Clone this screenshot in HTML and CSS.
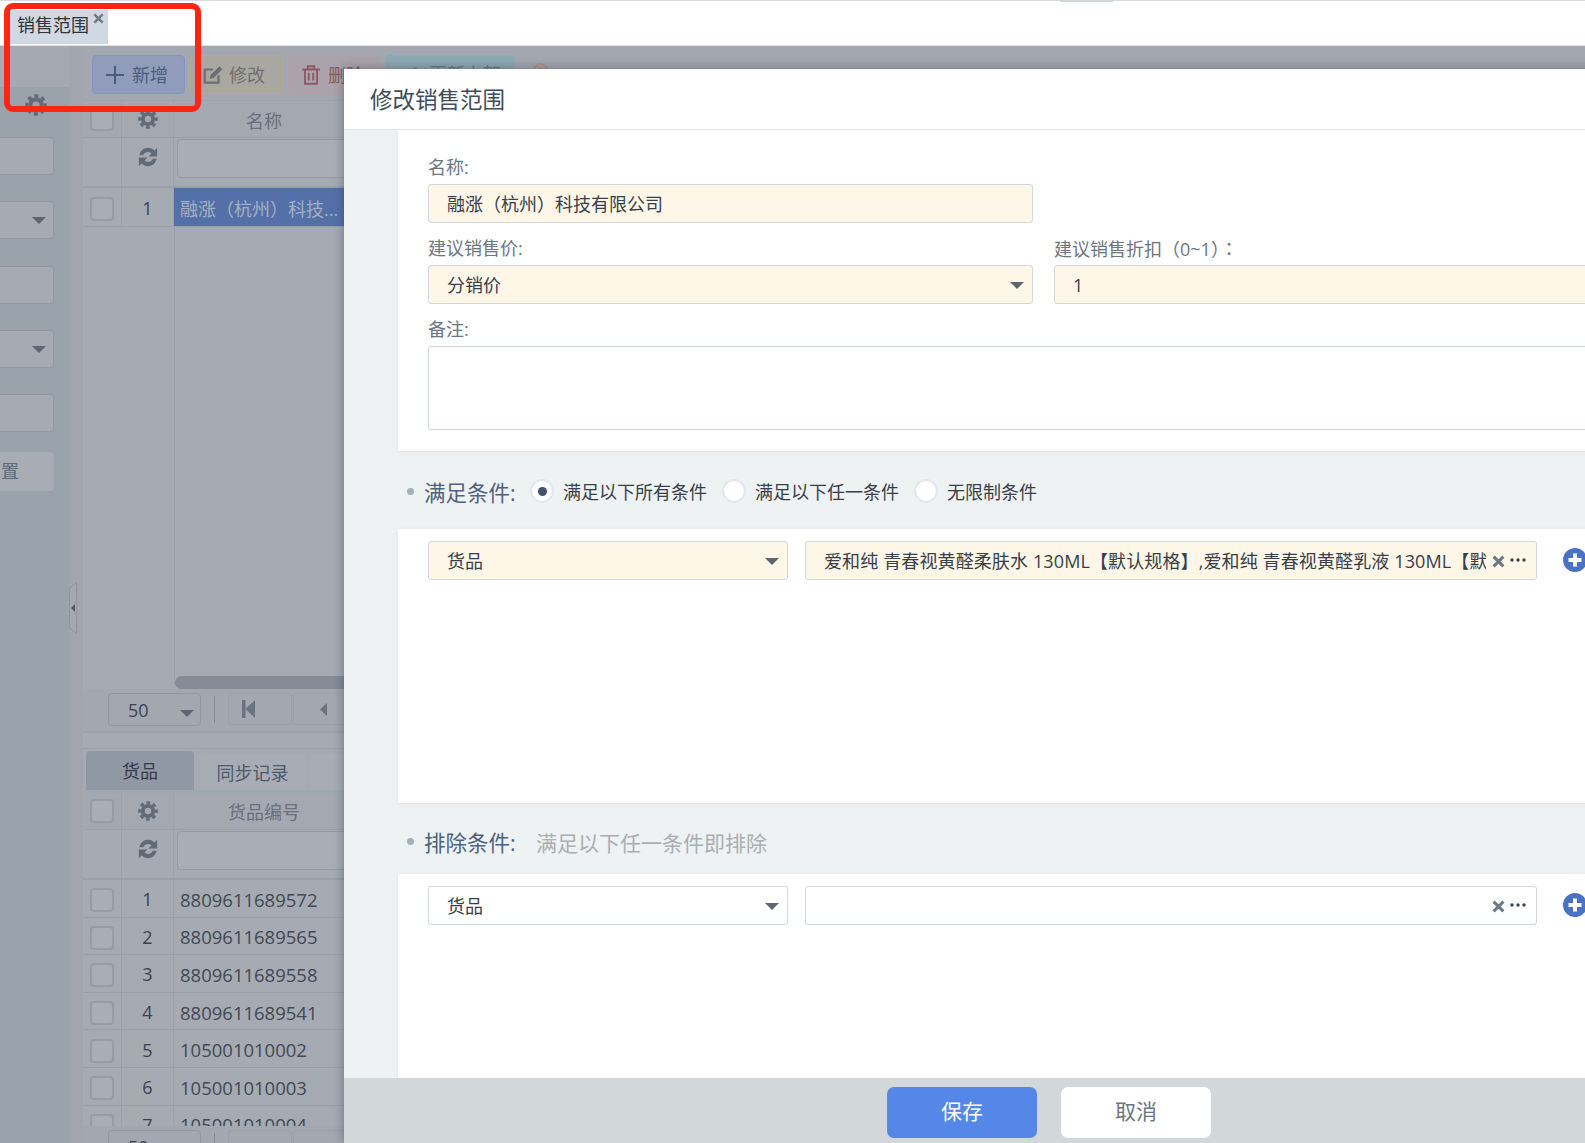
FILE: index.html
```html
<!DOCTYPE html>
<html>
<head>
    <title>销售范围</title>
    <link rel="stylesheet" href="styles.css">
</head>
<body>
    <svg class="defs" width="0" height="0">
        <symbol id="i-cog" viewBox="0 0 24 24">
            <circle cx="12" cy="12" r="6.2" fill="none" stroke="currentColor" stroke-width="4.6"/>
            <circle cx="12" cy="12" r="10" fill="none" stroke="currentColor" stroke-width="3.6" stroke-dasharray="4.4 3.45" stroke-dashoffset="2.2"/>
        </symbol>
        <symbol id="i-refresh" viewBox="0 0 24 24">
            <path d="M2.500 10.200C3.600 5.400 7.400 2 12.200 2c2.600 0 5 1 6.800 2.800L22 2v9.500h-9.500l3.300-3.300c-1-1-2.300-1.600-3.700-1.600-2.500 0-4.600 1.500-5.400 3.600z" fill="currentColor"/>
            <path d="M21.500 13.800C20.400 18.600 16.600 22 11.800 22c-2.600 0-5-1-6.800-2.800L2 22v-9.500h9.500l-3.300 3.300c1 1 2.300 1.600 3.700 1.600 2.500 0 4.600-1.500 5.400-3.600z" fill="currentColor"/>
        </symbol>
        <symbol id="i-plus" viewBox="0 0 24 24">
            <circle cx="12" cy="12" r="12" fill="currentColor"/>
            <path d="M12 5.500v13M5.500 12h13" stroke="#fff" stroke-width="4"/>
        </symbol>
        <symbol id="i-x" viewBox="0 0 12 12">
            <path d="M1.500 1.500l9 9M10.500 1.500l-9 9" stroke="currentColor" stroke-width="2.800" fill="none"/>
        </symbol>
        <symbol id="i-dots" viewBox="0 0 16 4">
            <circle cx="2" cy="2" r="1.700" fill="currentColor"/>
            <circle cx="8" cy="2" r="1.700" fill="currentColor"/>
            <circle cx="14" cy="2" r="1.700" fill="currentColor"/>
        </symbol>
    </svg>

    <div class="topbar">
        <div class="tab-open">
            <span>销售范围</span>
            <svg class="tab-close"><use href="#i-x"/></svg>
        </div>
    </div>
    <div class="top-grip"></div>

    <div class="app">
        <div class="side">
            <div class="side-top"></div>
            <svg class="side-cog"><use href="#i-cog"/></svg>
            <div class="side-field"></div>
            <div class="side-field"><i class="caret"></i></div>
            <div class="side-field"></div>
            <div class="side-field"><i class="caret"></i></div>
            <div class="side-field"></div>
            <div class="side-btn">置</div>
        </div>
        <div class="gutter">
            <svg class="splitter" width="8" height="52" viewBox="0 0 8 52">
                <polygon points="0.500,6 7.500,0.500 7.500,51.500 0.500,46" fill="#a3a8b1" stroke="#8e949e"/>
                <polygon points="2,26 6,22 6,30" fill="#4f5763"/>
            </svg>
        </div>
        <div class="main">
            <div class="toolbar">
                <div class="tool tool-add">
                    <svg width="20" height="20" viewBox="0 0 20 20"><path d="M10 1v18M1 10h18" stroke="currentColor" stroke-width="2" fill="none"/></svg>
                    新增
                </div>
                <div class="tool tool-edit">
                    <svg width="22" height="22" viewBox="0 0 20 20"><path d="M15 10.500V17H2.500V5H10" stroke="currentColor" stroke-width="2" fill="none"/><path d="M7 13.500l.8-3.500 8-8 2.700 2.700-8 8z" fill="currentColor"/></svg>
                    修改
                </div>
                <div class="tool tool-del">
                    <svg width="20" height="22" viewBox="0 0 18 20"><path d="M1 5h16M6 5V2h6v3M3.500 5v13h11V5M7 8v7M11 8v7" stroke="currentColor" stroke-width="1.700" fill="none"/></svg>
                    删除
                </div>
                <div class="tool tool-sync">
                    <svg width="14" height="18" viewBox="0 0 14 18"><path d="M7 2l6 6M7 2L1 8M7 2v14" stroke="currentColor" stroke-width="2" fill="none"/></svg>
                    更新上架
                </div>
                <div class="tool-help">?</div>
            </div>

            <div class="grid-head grid-head-1">
                <div class="cell-check"><i class="check"></i></div>
                <div class="cell-num"><svg class="grid-icon"><use href="#i-cog"/></svg></div>
                <div class="cell-text cell-title">名称</div>
            </div>
            <div class="grid-filter">
                <div class="cell-check"></div>
                <div class="cell-num"><svg class="grid-icon grid-icon-up"><use href="#i-refresh"/></svg></div>
                <div class="cell-text"><div class="filter-input"></div></div>
            </div>
            <div class="grid-row">
                <div class="cell-check"><i class="check"></i></div>
                <div class="cell-num">1</div>
                <div class="cell-text cell-selected">融涨（杭州）科技...</div>
            </div>
            <div class="grid-body">
                <div class="grid-scroll"></div>
            </div>
            <div class="pager">
                <div class="pager-size">50<i class="caret"></i></div>
                <div class="pager-sep"></div>
                <div class="pager-btn">
                    <svg width="13" height="18" viewBox="0 0 13 18"><path d="M0 0h3.500v18H0zM13 0v18L3.500 9z" fill="currentColor"/></svg>
                </div>
                <div class="pager-btn pager-prev">
                    <svg width="7" height="13" viewBox="0 0 7 13"><path d="M7 0v13L0 6.500z" fill="currentColor"/></svg>
                </div>
            </div>

            <div class="tabs">
                <div class="tab tab-on">货品</div>
                <div class="tab">同步记录</div>
                <div class="tab"></div>
            </div>
            <div class="grid-head grid-head-2">
                <div class="cell-check"><i class="check"></i></div>
                <div class="cell-num"><svg class="grid-icon"><use href="#i-cog"/></svg></div>
                <div class="cell-text cell-title">货品编号</div>
            </div>
            <div class="grid-filter">
                <div class="cell-check"></div>
                <div class="cell-num"><svg class="grid-icon grid-icon-up"><use href="#i-refresh"/></svg></div>
                <div class="cell-text"><div class="filter-input"></div></div>
            </div>
            <div class="grid-rows">
                <div class="grid-row"><div class="cell-check"><i class="check"></i></div><div class="cell-num">1</div><div class="cell-text">8809611689572</div></div>
                <div class="grid-row"><div class="cell-check"><i class="check"></i></div><div class="cell-num">2</div><div class="cell-text">8809611689565</div></div>
                <div class="grid-row"><div class="cell-check"><i class="check"></i></div><div class="cell-num">3</div><div class="cell-text">8809611689558</div></div>
                <div class="grid-row"><div class="cell-check"><i class="check"></i></div><div class="cell-num">4</div><div class="cell-text">8809611689541</div></div>
                <div class="grid-row"><div class="cell-check"><i class="check"></i></div><div class="cell-num">5</div><div class="cell-text">105001010002</div></div>
                <div class="grid-row"><div class="cell-check"><i class="check"></i></div><div class="cell-num">6</div><div class="cell-text">105001010003</div></div>
                <div class="grid-row"><div class="cell-check"><i class="check"></i></div><div class="cell-num">7</div><div class="cell-text">105001010004</div></div>
            </div>
            <div class="pager pager-last">
                <div class="pager-size">50<i class="caret"></i></div>
                <div class="pager-sep"></div>
                <div class="pager-btn"></div>
                <div class="pager-btn"></div>
            </div>
        </div>
    </div>

    <div class="dialog">
        <div class="dialog-title">修改销售范围</div>
        <div class="dialog-body">
            <div class="card card-form">
                <div class="form-row">
                    <div class="form-field">
                        <label class="form-label">名称:</label>
                        <div class="input input-req">融涨（杭州）科技有限公司</div>
                    </div>
                </div>
                <div class="form-row">
                    <div class="form-field">
                        <label class="form-label">建议销售价:</label>
                        <div class="input input-req">分销价<i class="caret"></i></div>
                    </div>
                    <div class="form-field">
                        <label class="form-label">建议销售折扣（0~1）<span class="colon-wide">：</span></label>
                        <div class="input input-req">1</div>
                    </div>
                </div>
                <div class="form-note">
                    <label class="form-label">备注:</label>
                    <div class="textarea"></div>
                </div>
            </div>

            <div class="section-head">
                <i class="bullet"></i>
                <span class="section-name">满足条件:</span>
                <span class="radio radio-on"></span><span class="radio-text">满足以下所有条件</span>
                <span class="radio"></span><span class="radio-text">满足以下任一条件</span>
                <span class="radio"></span><span class="radio-text">无限制条件</span>
            </div>
            <div class="card card-cond">
                <div class="cond-row">
                    <div class="input input-req cond-type">货品<i class="caret"></i></div>
                    <div class="input input-req cond-pick">
                        <span class="pick-text">爱和纯 青春视黄醛柔肤水 130ML【默认规格】,爱和纯 青春视黄醛乳液 130ML【默认规格】</span>
                        <svg class="pick-x"><use href="#i-x"/></svg>
                        <svg class="pick-dots"><use href="#i-dots"/></svg>
                    </div>
                    <svg class="cond-add"><use href="#i-plus"/></svg>
                </div>
            </div>

            <div class="section-head section-head-2">
                <i class="bullet"></i>
                <span class="section-name">排除条件:</span>
                <span class="section-hint">满足以下任一条件即排除</span>
            </div>
            <div class="card card-last">
                <div class="cond-row">
                    <div class="input cond-type">货品<i class="caret"></i></div>
                    <div class="input cond-pick">
                        <span class="pick-text"></span>
                        <svg class="pick-x"><use href="#i-x"/></svg>
                        <svg class="pick-dots"><use href="#i-dots"/></svg>
                    </div>
                    <svg class="cond-add"><use href="#i-plus"/></svg>
                </div>
            </div>
        </div>
        <div class="dialog-foot">
            <div class="btn btn-save">保存</div>
            <div class="btn btn-cancel">取消</div>
        </div>
    </div>

    <div class="mark"></div>
</body>
</html>
```

FILE: styles.css
```css
* { box-sizing: border-box; }
html, body { margin: 0; height: 100%; overflow: hidden; }
body { position: relative; width: 1585px; height: 1143px; font-family: "Open Sans", "Noto Sans CJK SC", sans-serif; font-size: 18px; color: #3a4450; background: #a6aab3; }
.defs { position: absolute; }

/* top strip */
.topbar { height: 46px; padding: 10px 0 1px 10px; background: #fff; border-top: 1px solid #d6dcdc; border-bottom: 1px solid #dfe3e6; display: flex; }
.tab-open { width: 98px; height: 34px; margin-top: -1px; padding-left: 7px; background: #d0d8e3; color: #333; position: relative; line-height: 31px; }
.tab-close { position: absolute; left: 83px; top: 3px; width: 11px; height: 11px; color: #6f7a86; }
.top-grip { position: absolute; left: 1060px; top: 0; width: 53px; height: 2px; background: #d0d5d5; }

/* dimmed page behind the dialog */
.app { display: flex; height: 1097px; }
.side { width: 69px; background: #9aa2ac; display: flex; flex-direction: column; align-items: flex-start; }
.side-top { width: 69px; height: 41px; background: #a5a9b2; flex: none; }
.side-cog { width: 22px; height: 22px; margin: 7px 0 0 25px; color: #626c79; flex: none; }
.side-field { width: 54px; height: 38px; margin-top: 26.25px; background: #a6aab3; border: 1px solid #9399a3; border-left: 0; border-radius: 0 4px 4px 0; position: relative; flex: none; }
.side-cog + .side-field { margin-top: 21px; }
.side-field .caret { left: 32px; top: 15px; }
.side-btn { width: 54px; height: 39px; margin-top: 20px; padding-left: 1px; background: #a8acb5; border-radius: 0 4px 4px 0; line-height: 38px; color: #5d6a7c; overflow: hidden; flex: none; }

.gutter { width: 14px; background: #a0a5ae; position: relative; }
.splitter { position: absolute; left: 0; top: 536px; }

.main { flex: 1; min-width: 0; background: #a6aab3; display: flex; flex-direction: column; }
.toolbar { height: 54px; flex: none; padding: 9px 0 0 9px; display: flex; gap: 5px; background: #a3a7b0; }
.tool { height: 39px; width: 93px; padding: 1px 4px 0 0; border: 1px solid; border-radius: 4px; display: flex; align-items: center; justify-content: center; gap: 7px; font-size: 18px; line-height: 37px; }
.tool-add { background: #909cb9; border-color: #8097c4; color: #4c5c7e; }
.tool-edit { background: #a9a8a0; border-color: #b4ab8f; color: #6c6f72; gap: 5px; padding-right: 6px; }
.tool-del { background: #aba3ab; border-color: #b59ea3; color: #8c5a60; }
.tool-sync { width: 129px; padding: 0 0 0 8px; background: #8fa8b2; border-color: #82aeb8; color: #56808f; }
.tool-help { width: 15px; height: 15px; margin: 8px 0 0 13px; border: 2px solid #b48f86; border-radius: 50%; font-size: 11px; line-height: 11px; text-align: center; color: #b48f86; }

.grid-head, .grid-filter, .grid-row { display: flex; flex: none; border-bottom: 1px solid #9aa0aa; background: #a6aab3; }
.grid-head { height: 38px; background: #a4a8b1; border-top: 1px solid #9ea3ad; }
.grid-filter { height: 50px; border-bottom: 2px solid #98a0aa; }
.grid-row { height: 39px; }
.cell-check { width: 39px; flex: none; border-right: 1px solid #9ca1ab; display: flex; align-items: center; padding-left: 7px; }
.cell-num { width: 52px; flex: none; border-right: 1px solid #9ca1ab; display: flex; align-items: center; justify-content: center; color: #3b4250; }
.cell-text { flex: 1; min-width: 0; padding-left: 6px; display: flex; align-items: center; color: #3f4652; white-space: nowrap; overflow: hidden; }
.cell-title { flex: 0 0 180px; padding-left: 0; justify-content: center; color: #69707d; }
.grid-head-1 .cell-title { padding-top: 2px; }
.cell-selected { background: #5470a9; color: #a5afc1; padding-left: 6px; }
.check { display: block; width: 24px; height: 24px; background: #a9adb6; border: 2px solid #969ba5; border-radius: 4px; }
.grid-row .check { margin-top: 4px; }
.grid-row .cell-num, .grid-row .cell-text { padding-top: 2px; }
.grid-icon { width: 20px; height: 20px; color: #616b78; }
.grid-icon-up { width: 22px; height: 22px; margin-top: -10px; }
.filter-input { width: 400px; height: 39px; margin: -7px 0 0 -3px; background: #a9adb6; border: 1px solid #969ba5; border-radius: 4px; flex: none; }
.grid-body { flex: none; height: 462px; margin-left: 91px; border-left: 1px solid #9ca1ab; display: flex; flex-direction: column; justify-content: flex-end; }
.grid-scroll { height: 13px; background: #858b97; border-radius: 7px 0 0 7px; }

.pager { flex: none; height: 44px; padding: 4px 0 0 25px; display: flex; align-items: flex-start; gap: 13px; background: #a3a7b0; border-bottom: 2px solid #9ca2ac; }
.pager-size { width: 93px; height: 33px; padding-left: 19px; border: 1px solid #9097a1; border-radius: 4px; position: relative; line-height: 33px; color: #3d4450; }
.pager-size .caret { left: 71px; top: 16px; }
.pager-sep { width: 1px; height: 27px; margin-top: 3px; background: #868d98; }
.pager-btn { width: 64px; height: 32px; margin-right: -12px; padding-left: 13px; border: 1px solid #9ba0aa; border-radius: 3px; color: #6a7380; display: flex; align-items: center; }
.pager-prev { padding-left: 26px; }
.pager-last { height: 30px; }

.tabs { flex: none; height: 45px; margin-top: 15px; padding: 3px 0 0 3px; display: flex; gap: 6px; align-items: flex-end; border-top: 1px solid #9ca2ac; border-bottom: 3px solid #9ea8b2; }
.tab { width: 105px; height: 36px; background: #a8acb5; border-radius: 4px 4px 0 0; line-height: 38px; text-align: center; color: #4d5a6e; }
.tab:last-child { width: 60px; }
.tab-on { width: 108px; height: 39px; background: #9098a5; color: #333b48; line-height: 41px; }

.grid-head-2 { height: 37px; border-top: 0; }
.grid-rows { flex: none; height: 246px; overflow: hidden; }
.grid-rows .grid-row { height: 37.6px; }
.grid-rows .grid-row .cell-text { color: #424955; font-size: 18.500px; }

.caret { position: absolute; display: block; width: 0; height: 0; border-left: 7px solid transparent; border-right: 7px solid transparent; border-top: 7px solid #5d6672; }

/* dialog */
.dialog { position: absolute; left: 344px; top: 69px; width: 1410px; height: 1074px; background: #eef2f3; box-shadow: 0 0 10px rgba(40, 45, 60, .45); display: flex; flex-direction: column; }
.dialog-title { height: 61px; flex: none; padding-left: 26px; background: #fff; border-bottom: 1px solid #e2e6e8; font-size: 22.5px; line-height: 61px; color: #3f4c5a; }
.dialog-body { flex: 1; min-height: 0; padding: 0 54px; display: flex; flex-direction: column; overflow: hidden; }
.card { background: #fff; padding: 0 30px; box-shadow: 0 1px 4px rgba(120, 130, 140, .12); }
.card-form { height: 321px; padding-top: 24px; }
.card-cond { height: 274px; padding-top: 12px; }
.card-last { height: 204px; padding-top: 12px; }

.form-row { display: flex; gap: 21px; margin-bottom: 12px; }
.form-field { width: 605px; flex: none; }
.form-label { display: block; height: 25px; margin-bottom: 5px; line-height: 26px; color: #6b7682; }
.colon-wide { font-family: "Noto Sans CJK TC", sans-serif; }
.input { height: 39px; padding-left: 18px; background: #fff; border: 1px solid #cfd8da; border-radius: 3px; position: relative; line-height: 39px; color: #37404a; white-space: nowrap; }
.input-req { background: #fef6e7; }
.input .caret { right: 8px; top: 16px; }
.textarea { width: 1242px; height: 84px; margin-top: 1px; background: #fff; border: 1px solid #cfd8da; border-radius: 3px; }

.section-head { height: 78px; flex: none; padding: 2px 0 0 9px; display: flex; align-items: center; }
.section-head-2 { height: 71px; padding-top: 6px; }
.bullet { width: 7px; height: 7px; margin-right: 10px; background: #a3b0ba; border-radius: 50%; }
.section-name { width: 106px; font-size: 21.5px; color: #50627f; white-space: nowrap; }
.section-hint { margin-left: 6px; font-size: 21px; color: #aaaeb1; }
.radio { width: 24px; height: 24px; margin-right: 9px; background: #fff; border: 2px solid #e2e6f0; border-radius: 50%; display: flex; align-items: center; justify-content: center; flex: none; }
.radio-on::after { content: ""; width: 9px; height: 9px; background: #44506e; border-radius: 50%; }
.radio-text { margin-right: 15px; color: #37404a; white-space: nowrap; }

.cond-row { display: flex; align-items: flex-start; }
.cond-type { width: 360px; flex: none; }
.cond-pick { width: 732px; margin-left: 17px; padding-right: 50px; flex: none; }
.pick-text { display: block; overflow: hidden; letter-spacing: .12px; }
.pick-x { position: absolute; left: 686px; top: 13px; width: 13px; height: 13px; color: #6c7885; }
.pick-dots { position: absolute; left: 704px; top: 16px; width: 16px; height: 4px; color: #3a4654; }
.cond-add { width: 24px; height: 24px; margin: 7px 0 0 26px; color: #4a72c4; flex: none; }

.dialog-foot { height: 65px; flex: none; padding-top: 9px; background: #d2d7d9; display: flex; justify-content: center; gap: 24px; }
.btn { width: 150px; height: 51px; border-radius: 7px; font-size: 21px; line-height: 48px; text-align: center; }
.btn-save { background: #5487e8; color: #fff; }
.btn-cancel { background: #fff; color: #6a7580; }

/* red box drawn over the screenshot */
.mark { position: absolute; left: 4px; top: 3px; width: 197px; height: 109px; border: 6px solid #ff2514; border-radius: 9px; }
```
